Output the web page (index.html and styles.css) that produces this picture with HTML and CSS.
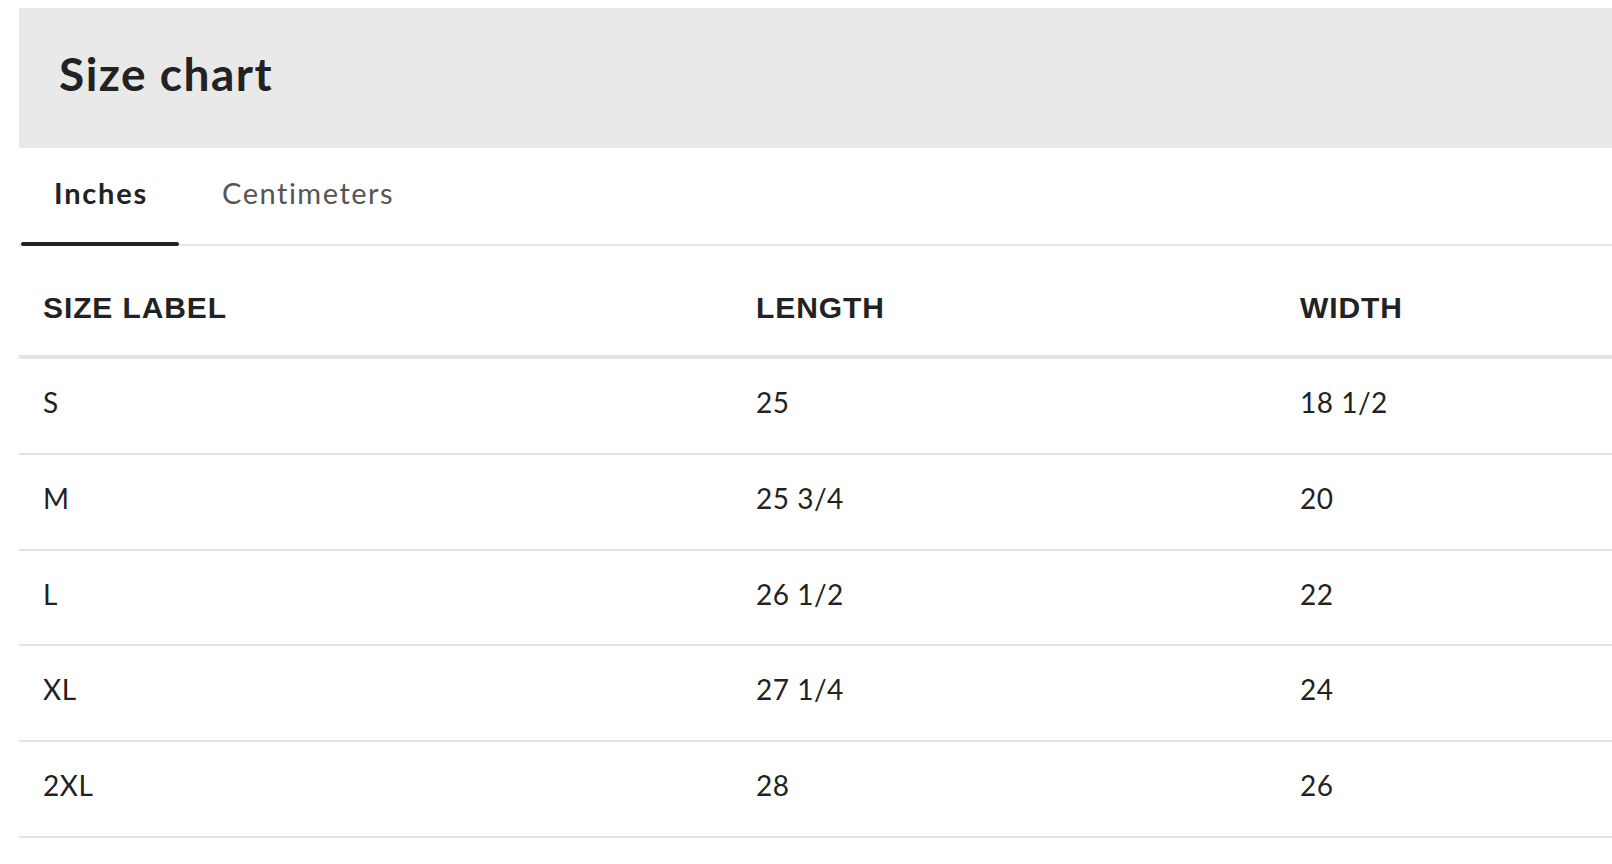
FILE: index.html
```html
<!DOCTYPE html>
<html lang="en">
<head>
<meta charset="utf-8">
<title>Size chart</title>
<link rel="stylesheet" href="styles.css">
</head>
<body>
<div class="page">
  <header class="chart-header">
    <h1 class="chart-title">Size chart</h1>
  </header>
  <nav class="tabs">
    <button class="tab tab-active">Inches</button>
    <button class="tab">Centimeters</button>
  </nav>
  <table class="chart-table">
    <colgroup>
      <col class="col-size">
      <col class="col-length">
      <col class="col-width">
    </colgroup>
    <thead>
      <tr><th>SIZE LABEL</th><th>LENGTH</th><th>WIDTH</th></tr>
    </thead>
    <tbody>
      <tr><td>S</td><td>25</td><td>18 1/2</td></tr>
      <tr><td>M</td><td>25 3/4</td><td>20</td></tr>
      <tr><td>L</td><td>26 1/2</td><td>22</td></tr>
      <tr><td>XL</td><td>27 1/4</td><td>24</td></tr>
      <tr><td>2XL</td><td>28</td><td>26</td></tr>
    </tbody>
  </table>
</div>
</body>
</html>
```

FILE: styles.css
```css
* { box-sizing: border-box; }
html, body { margin: 0; padding: 0; background: #fff; }
body {
  font-family: Lato, "Open Sans", sans-serif;
  color: #222;
}
.page {
  margin: 8px 0 0 19px;
  width: 1593px;
}
.chart-header {
  background: #e9e9e9;
  height: 140px;
  padding: 39px 0 0 40px;
}
.chart-title {
  margin: 0;
  font-size: 46px;
  line-height: 54px;
  font-weight: 700;
  letter-spacing: 1.5px;
  color: #222;
}
.tabs {
  display: flex;
  align-items: flex-start;
  height: 98px;
  border-bottom: 2px solid #e5e5e5;
}
.tab {
  position: relative;
  display: block;
  background: none;
  border: 0;
  margin: 0;
  font-family: Lato, "Open Sans", sans-serif;
  font-size: 29px;
  line-height: 34px;
  padding: 28px 33px 34px 35px;
  color: #555;
  letter-spacing: 1.5px;
  cursor: pointer;
}
.tab + .tab { margin-left: 8px; }
.tab-active {
  font-weight: 700;
  color: #222;
  letter-spacing: 1.8px;
  padding-right: 31px;
}
.tab-active::after {
  content: "";
  position: absolute;
  left: 2px;
  right: 0;
  bottom: -2px;
  height: 4px;
  border-radius: 2px;
  background: #222;
}
.chart-table {
  width: 100%;
  table-layout: fixed;
  border-collapse: separate;
  border-spacing: 0;
}
.col-size { width: 713px; }
.col-length { width: 544px; }
.chart-table th {
  text-align: left;
  font-family: "Liberation Sans", Arial, sans-serif;
  font-weight: 700;
  font-size: 30px;
  letter-spacing: 0.9px;
  line-height: 34px;
  padding: 45px 0 30px 24px;
  border-bottom: 4px solid #e4e4e4;
  color: #222;
}
.chart-table td {
  font-size: 28px;
  line-height: 34px;
  padding: 26px 0 33.75px 24px;
  border-bottom: 2px solid #e4e4e4;
  letter-spacing: 0.5px;
  color: #222;
}
```
